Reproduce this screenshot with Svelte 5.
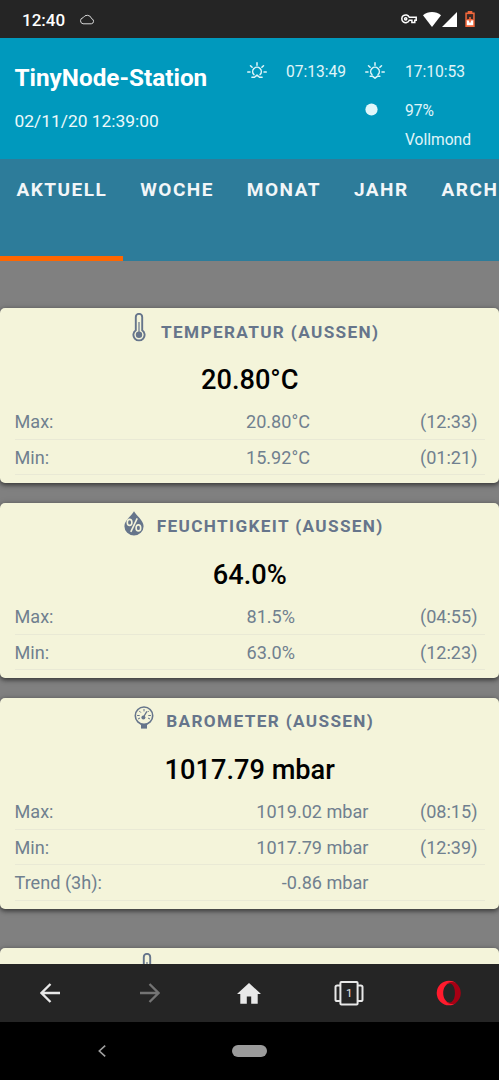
<script lang="ts">
  type Row = { label: string; value: string; time?: string };
  type Card = { icon: "thermometer" | "humidity" | "barometer"; title: string; value: string; rows: Row[] };

  const tabs = ["AKTUELL", "WOCHE", "MONAT", "JAHR", "ARCHIV"];
  let active = $state("AKTUELL");

  const cards: Card[] = [
    {
      icon: "thermometer",
      title: "TEMPERATUR (AUSSEN)",
      value: "20.80°C",
      rows: [
        { label: "Max:", value: "20.80°C", time: "(12:33)" },
        { label: "Min:", value: "15.92°C", time: "(01:21)" },
      ],
    },
    {
      icon: "humidity",
      title: "FEUCHTIGKEIT (AUSSEN)",
      value: "64.0%",
      rows: [
        { label: "Max:", value: "81.5%", time: "(04:55)" },
        { label: "Min:", value: "63.0%", time: "(12:23)" },
      ],
    },
    {
      icon: "barometer",
      title: "BAROMETER (AUSSEN)",
      value: "1017.79 mbar",
      rows: [
        { label: "Max:", value: "1019.02 mbar", time: "(08:15)" },
        { label: "Min:", value: "1017.79 mbar", time: "(12:39)" },
        { label: "Trend (3h):", value: "-0.86 mbar" },
      ],
    },
    { icon: "thermometer", title: "TEMPERATUR (INNEN)", value: "", rows: [] },
  ];
</script>

<div class="screen">
  <div class="status">
    <span class="clock">12:40</span>
    <svg class="cloud" width="16" height="11" viewBox="0 0 16 11" fill="none" stroke="#d8d8d8">
      <path d="M4 9.8H12.3A2.6 2.6 0 0 0 12.6 4.7A4.6 4.6 0 0 0 4.1 3.7A3.1 3.1 0 0 0 4 9.8Z" />
    </svg>
    <div class="signals">
      <svg width="16" height="10" viewBox="0 0 16 10" fill="none" stroke="#fff" stroke-width="1.5">
        <path d="M8.3 3.3H15.2V6.3H13.8V8.6H10.9V6.3H8.3A3.9 3.9 0 1 1 8.3 3.3Z" />
        <circle cx="4.7" cy="4.8" r="1.1" />
      </svg>
      <svg class="wifi" width="18" height="15" viewBox="0 0 18 15" fill="#fff">
        <path d="M0 3.3C5 -1.1 13 -1.1 18 3.3L9 15Z" />
      </svg>
      <svg class="cell" width="15" height="15" viewBox="0 0 15 15" fill="#fff">
        <path d="M15 0V15H0Z" />
      </svg>
      <svg class="battery" width="10" height="16" viewBox="0 0 10 16">
        <path d="M2.7 0H7.3V1.5H9.7V16H.3V1.5H2.7Z" fill="#f2683c" />
        <path d="M1.8 3.1H8.2V9H1.8Z" fill="#3a2a26" />
        <path d="M1.8 9H8.2V14.2H1.8Z" fill="#fff" />
        <path d="M4.2 6H5.8V8H7.8V9.6H5.8V11.6H4.2V9.6H2.2V8H4.2Z" fill="#f2683c" />
      </svg>
    </div>
  </div>

  <header>
    <div class="station">
      <h1>TinyNode-Station</h1>
      <p>02/11/20 12:39:00</p>
    </div>
    <div class="almanac">
      <svg width="20" height="17" viewBox="0 0 20 17" fill="none" stroke="#e0f5f9" stroke-width="1.5" stroke-linecap="round">
        <path d="M10 .8V3.2M3.5 3.7L5.1 5.3M16.5 3.7L14.9 5.3M.7 10H3M17 10H19.3" />
        <path d="M6.9 12.6A4.3 4.3 0 1 1 13.1 12.6M4.9 15.3H7.5L10 13.1L12.5 15.3H15.1" stroke-linejoin="round" />
      </svg>
      <span>07:13:49</span>
      <svg width="20" height="17" viewBox="0 0 20 17" fill="none" stroke="#e0f5f9" stroke-width="1.5" stroke-linecap="round">
        <path d="M10 .8V3.2M3.5 3.7L5.1 5.3M16.5 3.7L14.9 5.3M.7 10H3M17 10H19.3" />
        <path d="M6.9 12.6A4.3 4.3 0 1 1 13.1 12.6M5.1 14.3H7.7L10 16.2L12.3 14.3H14.9" stroke-linejoin="round" />
      </svg>
      <span>17:10:53</span>
      <svg class="moon" width="13" height="13" viewBox="0 0 13 13" fill="#e0f7fa">
        <circle cx="6.5" cy="6.5" r="6.1" />
      </svg>
      <span class="phase">97%<br />Vollmond</span>
    </div>
  </header>

  <nav class="tabs">
    {#each tabs as tab}
      <button class:active={tab === active} onclick={() => (active = tab)}>{tab}</button>
    {/each}
  </nav>

  <main>
    {#each cards as card}
      <section class={card.icon}>
        <h2>
          <span class="icon">
            {#if card.icon === "thermometer"}
              <svg width="14" height="29" viewBox="0 0 14 29" fill="none" stroke="#66758b">
                <path d="M3.8 17.2V4A3.2 3.2 0 0 1 10.2 4V17.2A5.6 5.6 0 1 1 3.8 17.2Z" stroke-width="1.9" />
                <path d="M7 9V20" stroke-width="1.2" />
                <circle cx="7" cy="21.8" r="3.2" fill="#66758b" stroke="none" />
              </svg>
            {:else if card.icon === "humidity"}
              <svg width="20" height="25" viewBox="0 0 20 25">
                <path d="M10 .3C12 4.4 19.6 9.3 19.6 15.3A9.6 9.2 0 0 1 .4 15.3C.4 9.3 8 4.4 10 .3Z" fill="#66758b" />
                <g fill="none" stroke="#f4f4da" stroke-width="1.6">
                  <ellipse cx="5.6" cy="11.4" rx="2.3" ry="3" />
                  <ellipse cx="14.4" cy="16.9" rx="2.3" ry="3" />
                  <path d="M13.2 7.4L6.8 20.9" />
                </g>
              </svg>
            {:else}
              <svg width="20" height="23" viewBox="0 0 20 23" fill="none" stroke="#66758b">
                <circle cx="10" cy="9.7" r="8.7" stroke-width="1.6" />
                <path d="M7 18.2H13V22.6H7Z" fill="#66758b" stroke="none" />
                <path d="M3.1 9.5H5.7M14.3 9.5H16.9M10 3V5.4M5.2 4.9L6.9 6.6M14.8 4.9L13.6 6.1M4 13L6 12M16 13L14 12" />
                <path d="M9.5 11L12.9 5.3" stroke-width="1.3" />
                <circle cx="9.4" cy="11.4" r="2" fill="#66758b" stroke="none" />
              </svg>
            {/if}
          </span>
          {card.title}
        </h2>
        <div class="current">{card.value}</div>
        {#each card.rows as row}
          <div class="row">
            <span>{row.label}</span>
            <span>{row.value}</span>
            <span>{row.time ?? ""}</span>
          </div>
        {/each}
      </section>
    {/each}
  </main>

  <div class="toolbar">
    <svg width="20" height="20" viewBox="0 0 20 20" fill="none" stroke="#e8e8e8" stroke-width="2.3">
      <path d="M20 10H2M10.5 1L1.5 10L10.5 19" />
    </svg>
    <svg width="20" height="20" viewBox="0 0 20 20" fill="none" stroke="#747474" stroke-width="2.3">
      <path d="M0 10H18M9.5 1L18.5 10L9.5 19" />
    </svg>
    <svg width="24" height="21" viewBox="0 0 24 21" fill="#e8e8e8">
      <path d="M12 0L24 11H20.7V20.8H14.2V13.6H9.8V20.8H3.3V11H0Z" />
    </svg>
    <div class="pages">
      <svg width="30" height="26" viewBox="0 0 30 26" fill="none" stroke="#e8e8e8" stroke-width="2">
        <rect x="6.4" y="2" width="17.2" height="22.4" rx="1" />
        <path d="M6 5.4H3.2Q1.5 5.4 1.5 7V19.4Q1.5 21 3.2 21H6M24 5.4H26.8Q28.5 5.4 28.5 7V19.4Q28.5 21 26.8 21H24" />
      </svg>
      <span>1</span>
    </div>
    <svg width="26" height="26" viewBox="0 0 26 26">
      <path d="M13 .7A12.3 12.3 0 0 0 13 25.3C16 25.3 18 24.5 19.8 23C17.3 24 15.7 23.5 14 23C9.3 22 7.2 17.5 7.2 13S9.3 4 14 3C15.7 2.5 17.3 2 19.8 3C18 1.5 16 .7 13 .7Z" fill="#ff1b2d" />
      <path d="M9.5 5C11.8 1.8 16.2 1 19.8 3.1A12.3 12.3 0 0 1 19.8 22.9C16.2 25 11.8 24.2 9.5 21C11.2 22.8 13.5 23.2 15.5 22C20.1 19.2 20.1 6.8 15.5 4C13.5 2.8 11.2 3.2 9.5 5Z" fill="#a70014" />
    </svg>
  </div>

  <div class="system">
    <svg width="8" height="12" viewBox="0 0 8 12" fill="none" stroke="#a0a0a0" stroke-width="1.6">
      <path d="M7.2 .6L1.3 6L7.2 11.4" />
    </svg>
    <div class="pill"></div>
    <span></span>
  </div>
</div>

<style>
  :global(body) {
    margin: 0;
    background: #000;
  }

  .screen {
    width: 499px;
    height: 1080px;
    display: flex;
    flex-direction: column;
    overflow: hidden;
    font-family: Roboto, "Liberation Sans", sans-serif;
    background: #808080;
  }

  svg {
    display: block;
    flex: none;
  }

  .status {
    height: 38px;
    flex: none;
    box-sizing: border-box;
    padding: 0 24.5px 0 22px;
    display: flex;
    align-items: center;
    background: #252525;
    color: #fff;
  }

  .clock {
    font-size: 17px;
    font-weight: 500;
    padding-top: 2px;
  }

  .cloud {
    margin-left: 14px;
  }

  .signals {
    margin-left: auto;
    display: flex;
    align-items: center;
  }

  .signals svg:first-child {
    margin-right: -1px;
    position: relative;
    left: -1px;
  }

  .wifi {
    margin-left: 6px;
  }

  .cell {
    margin-left: 1px;
  }

  .battery {
    margin-left: 8px;
  }

  header {
    height: 120.5px;
    flex: none;
    display: flex;
    background: #0099bd;
    color: #fff;
  }

  .station {
    width: 232px;
    padding-left: 14.5px;
  }

  h1 {
    margin: 26px 0 0;
    font-size: 24.3px;
    line-height: 28px;
    font-weight: 700;
    white-space: nowrap;
  }

  p {
    margin: 18px 0 0;
    font-size: 17.4px;
    line-height: 22px;
    color: #edf9fb;
  }

  .almanac {
    display: grid;
    grid-template-columns: 39.5px 79px 40px 90px;
    grid-template-rows: 24px 58px;
    row-gap: 9px;
    padding-top: 21px;
    align-items: center;
    font-size: 15.6px;
    color: #e0f5f9;
  }

  .almanac span {
    padding-top: 2px;
  }

  .almanac svg {
    margin-top: -2px;
  }

  .almanac .moon {
    grid-column: 3;
    align-self: start;
    margin-top: 11px;
  }

  .almanac .phase {
    line-height: 29px;
    align-self: start;
    padding-top: 5px;
  }

  .tabs {
    height: 102.5px;
    flex: none;
    display: flex;
    overflow: hidden;
    background: #2d7c9a;
  }

  .tabs button {
    flex: none;
    border: 0;
    border-bottom: 5px solid transparent;
    background: none;
    padding: 19px 16.1px 0 16.8px;
    display: flex;
    align-items: flex-start;
    font: 700 19px/23px Roboto, sans-serif;
    letter-spacing: 1.5px;
    color: #f2f6f8;
  }

  .tabs .active {
    border-bottom-color: #ff6600;
    padding-left: 16.4px;
  }

  main {
    flex: 1;
    min-height: 0;
    padding-top: 47px;
    overflow: hidden;
  }

  section {
    box-sizing: border-box;
    height: 175.3px;
    margin-bottom: 19.7px;
    padding: 0 14px 0 14.5px;
    border-radius: 5px;
    background: #f4f4da;
    box-shadow: 0 2px 4px rgba(0, 0, 0, 0.45), 0 1px 7px rgba(0, 0, 0, 0.25);
    color: #70808f;
  }

  section.barometer {
    height: 211px;
    margin-bottom: 39.3px;
  }

  h2 {
    margin: 0;
    height: 47px;
    display: flex;
    justify-content: center;
    align-items: center;
    font-size: 17.2px;
    font-weight: 700;
    letter-spacing: 1.35px;
    color: #66758b;
    white-space: nowrap;
  }

  .icon {
    width: 37px;
    height: 37px;
    margin-right: 4px;
    display: flex;
    justify-content: center;
  }

  .humidity .icon,
  .barometer .icon {
    height: 30px;
  }

  .current {
    height: 51px;
    margin-bottom: -2px;
    line-height: 51px;
    text-align: center;
    font-size: 27.2px;
    font-weight: 500;
    color: #000;
  }

  .row {
    display: grid;
    grid-template-columns: 80px 215.5px 1fr;
    box-sizing: border-box;
    height: 35.6px;
    padding-right: 7.5px;
    line-height: 35px;
    font-size: 18.1px;
    white-space: nowrap;
    border-bottom: 1px solid #e9e9d5;
  }

  .row span:not(:first-child) {
    text-align: right;
  }

  .humidity .row {
    grid-template-columns: 80px 200.5px 1fr;
  }

  .barometer .row {
    grid-template-columns: 100px 254px 1fr;
  }

  .toolbar {
    position: relative;
    height: 58px;
    flex: none;
    display: grid;
    grid-template-columns: repeat(5, 1fr);
    place-items: center;
    background: #252525;
  }

  .pages {
    display: grid;
    place-items: center;
  }

  .pages svg,
  .pages span {
    grid-area: 1 / 1;
  }

  .pages span {
    font-size: 11.5px;
    color: #e8e8e8;
  }

  .system {
    height: 58px;
    flex: none;
    display: grid;
    grid-template-columns: 204px 91px 204px;
    place-items: center;
    background: #000;
  }

  .pill {
    width: 35px;
    height: 12px;
    border-radius: 6px;
    background: #9b9b9b;
  }
</style>
